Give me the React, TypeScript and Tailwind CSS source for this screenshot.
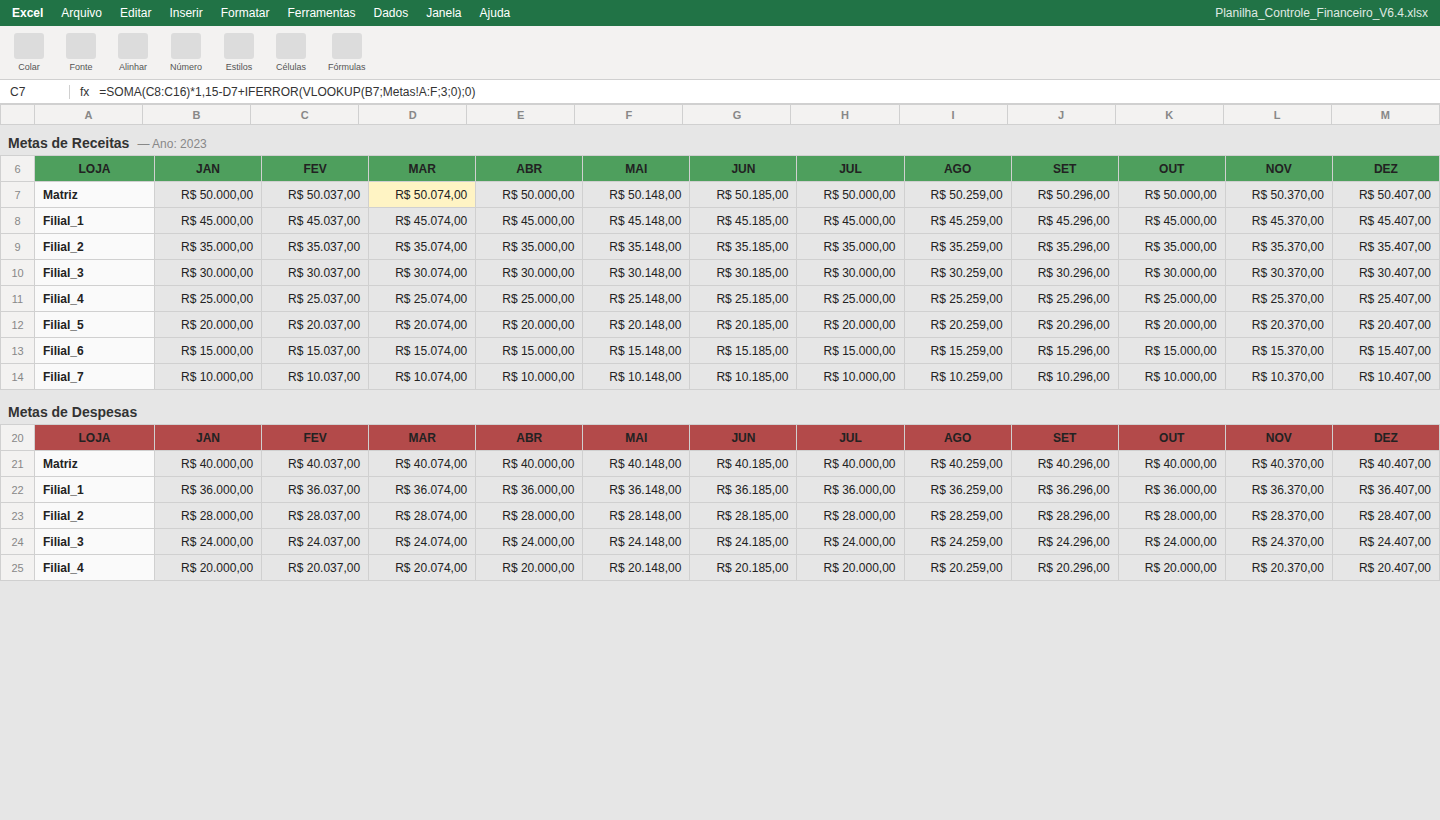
const menus = ["Arquivo", "Editar", "Inserir", "Formatar", "Ferramentas", "Dados", "Janela", "Ajuda"];

const tools = ["Colar", "Fonte", "Alinhar", "Número", "Estilos", "Células", "Fórmulas"];

const columns = ["A", "B", "C", "D", "E", "F", "G", "H", "I", "J", "K", "L", "M"];

const months = ["JAN", "FEV", "MAR", "ABR", "MAI", "JUN", "JUL", "AGO", "SET", "OUT", "NOV", "DEZ"];

type Row = { store: string; base: number };

const revenues: Row[] = [
  { store: "Matriz", base: 50000 },
  { store: "Filial_1", base: 45000 },
  { store: "Filial_2", base: 35000 },
  { store: "Filial_3", base: 30000 },
  { store: "Filial_4", base: 25000 },
  { store: "Filial_5", base: 20000 },
  { store: "Filial_6", base: 15000 },
  { store: "Filial_7", base: 10000 },
];

const expenses: Row[] = [
  { store: "Matriz", base: 40000 },
  { store: "Filial_1", base: 36000 },
  { store: "Filial_2", base: 28000 },
  { store: "Filial_3", base: 24000 },
  { store: "Filial_4", base: 20000 },
];

// every third month goes back to the base value
function goal(base: number, month: number) {
  const value = month % 3 === 0 ? base : base + month * 37;
  const digits = String(value);
  return `R$ ${digits.slice(0, -3)}.${digits.slice(-3)},00`;
}

function RowNumber({ value }: { value: number }) {
  return (
    <td className="border border-[#d0d0d0] bg-[#f3f2f1] p-0 text-center text-[11px] leading-4 text-[#888]">
      {value}
    </td>
  );
}

function GoalsTable({
  rows,
  firstRow,
  headClass,
  selected,
}: {
  rows: Row[];
  firstRow: number;
  headClass: string;
  selected?: [number, number];
}) {
  return (
    <table className="w-full table-fixed border-collapse text-xs text-[#222]">
      <colgroup>
        <col className="w-[34px]" />
        <col className="w-[120px]" />
        {months.map((m) => (
          <col key={m} />
        ))}
      </colgroup>
      <thead>
        <tr className="h-[26px]">
          <RowNumber value={firstRow} />
          {["LOJA", ...months].map((label) => (
            <th key={label} className={`border border-[#d0d0d0] p-0 font-bold ${headClass}`}>
              {label}
            </th>
          ))}
        </tr>
      </thead>
      <tbody>
        {rows.map((row, r) => (
          <tr key={row.store} className="h-[26px]">
            <RowNumber value={firstRow + r + 1} />
            <td className="border border-[#d0d0d0] bg-[#fafafa] px-2 py-0 font-bold">{row.store}</td>
            {months.map((m, c) => (
              <td
                key={m}
                className={`border border-[#d0d0d0] px-2 py-0 text-right whitespace-nowrap ${
                  selected && selected[0] === r && selected[1] === c ? "bg-[#fff4c4]" : ""
                }`}
              >
                {goal(row.base, c)}
              </td>
            ))}
          </tr>
        ))}
      </tbody>
    </table>
  );
}

export default function App() {
  return (
    <div className="flex h-screen flex-col overflow-hidden bg-[#e6e6e6] font-['Liberation_Sans',Arial,sans-serif] text-xs text-[#222]">
      {/* Menu bar */}
      <div className="flex h-[26px] shrink-0 items-center gap-[18px] bg-[#217346] px-3 text-white">
        <span className="font-bold">Excel</span>
        {menus.map((m) => (
          <span key={m}>{m}</span>
        ))}
        <span className="ml-auto opacity-85">Planilha_Controle_Financeiro_V6.4.xlsx</span>
      </div>

      {/* Ribbon */}
      <div className="flex h-[54px] shrink-0 items-center gap-[22px] border-b border-[#d0d0d0] bg-[#f3f2f1] px-3.5">
        {tools.map((t) => (
          <div key={t} className="flex flex-col items-center gap-[3px] text-[9px] leading-[10px] text-[#555]">
            <div className="h-[26px] w-[30px] rounded-[3px] bg-[#dcdcdc]" />
            {t}
          </div>
        ))}
      </div>

      {/* Formula bar */}
      <div className="flex h-6 shrink-0 items-center gap-2.5 border-b border-[#d0d0d0] bg-white px-2.5 text-[#333]">
        <span className="w-[60px] border-r border-[#d0d0d0] leading-[14px]">C7</span>
        <span>fx</span>
        <span>=SOMA(C8:C16)*1,15-D7+IFERROR(VLOOKUP(B7;Metas!A:F;3;0);0)</span>
      </div>

      {/* Sheet */}
      <table className="w-full shrink-0 table-fixed border-collapse text-[11px] text-[#888]">
        <thead>
          <tr className="h-5">
            <th className="w-[34px] border border-[#d0d0d0] bg-[#f3f2f1] p-0" />
            {columns.map((c) => (
              <th key={c} className="border border-[#d0d0d0] bg-[#f3f2f1] p-0 leading-[18px] font-bold">
                {c}
              </th>
            ))}
          </tr>
        </thead>
      </table>

      <h2 className="flex h-[30px] shrink-0 items-baseline gap-2 px-2 pt-[10px] text-sm leading-4 font-bold text-[#333]">
        Metas de Receitas
        <span className="text-xs font-normal text-[#888]">— Ano: 2023</span>
      </h2>
      <GoalsTable rows={revenues} firstRow={6} headClass="bg-[#4e9f5d]" selected={[0, 2]} />

      <h2 className="h-[34px] shrink-0 px-2 pt-[14px] text-sm leading-4 font-bold text-[#333]">Metas de Despesas</h2>
      <GoalsTable rows={expenses} firstRow={20} headClass="bg-[#b34a4a]" />
    </div>
  );
}
